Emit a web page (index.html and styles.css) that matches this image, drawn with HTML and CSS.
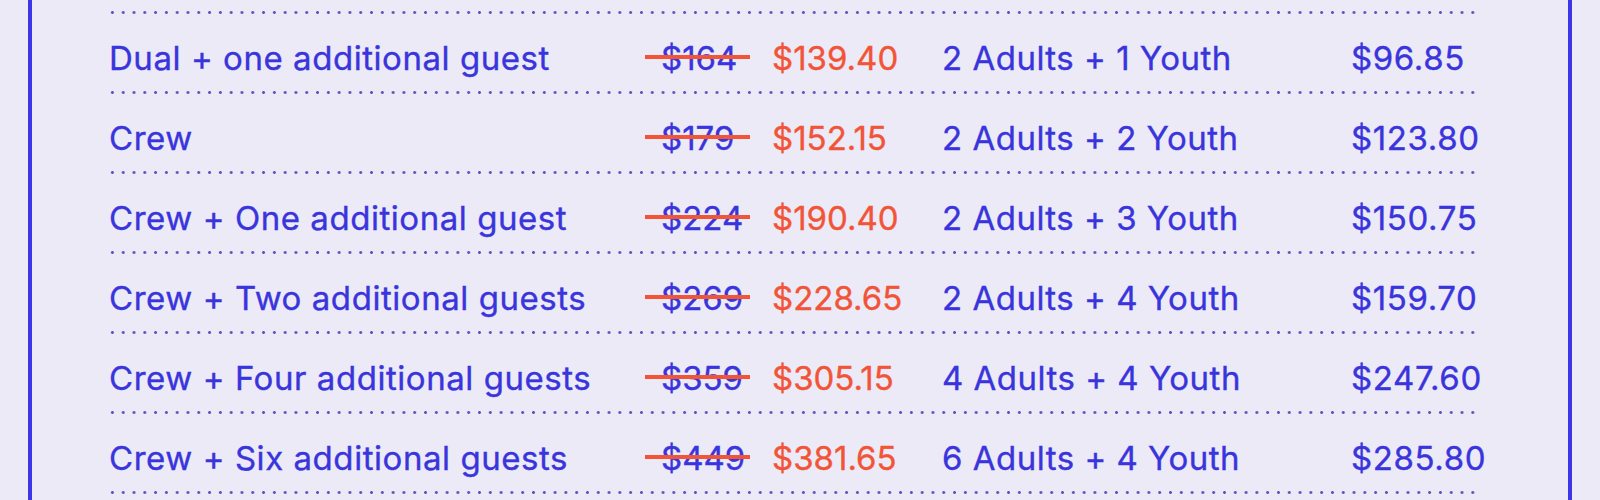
FILE: index.html
```html
<!DOCTYPE html>
<html lang="en">
<head>
    <meta charset="UTF-8">
    <meta name="viewport" content="width=device-width, initial-scale=1.0">
    <title>Membership Prices</title>
    <link rel="stylesheet" href="styles.css">
</head>
<body>
    <div class="price-card">
        <div class="price-list">
            <div class="price-row">
                <span class="tier">Dual + one additional guest</span>
                <span class="old-price">$164</span>
                <span class="new-price">$139.40</span>
                <span class="party">2 Adults + 1 Youth</span>
                <span class="per-visit">$96.85</span>
            </div>
            <div class="price-row">
                <span class="tier">Crew</span>
                <span class="old-price">$179</span>
                <span class="new-price">$152.15</span>
                <span class="party">2 Adults + 2 Youth</span>
                <span class="per-visit">$123.80</span>
            </div>
            <div class="price-row">
                <span class="tier">Crew + One additional guest</span>
                <span class="old-price">$224</span>
                <span class="new-price">$190.40</span>
                <span class="party">2 Adults + 3 Youth</span>
                <span class="per-visit">$150.75</span>
            </div>
            <div class="price-row">
                <span class="tier">Crew + Two additional guests</span>
                <span class="old-price">$269</span>
                <span class="new-price">$228.65</span>
                <span class="party">2 Adults + 4 Youth</span>
                <span class="per-visit">$159.70</span>
            </div>
            <div class="price-row">
                <span class="tier">Crew + Four additional guests</span>
                <span class="old-price">$359</span>
                <span class="new-price">$305.15</span>
                <span class="party">4 Adults + 4 Youth</span>
                <span class="per-visit">$247.60</span>
            </div>
            <div class="price-row">
                <span class="tier">Crew + Six additional guests</span>
                <span class="old-price">$449</span>
                <span class="new-price">$381.65</span>
                <span class="party">6 Adults + 4 Youth</span>
                <span class="per-visit">$285.80</span>
            </div>
        </div>
    </div>
</body>
</html>
```

FILE: styles.css
```css
body {
    margin: 0;
    background-color: #ebeaf6;
    font-family: Inter, "Noto Sans", sans-serif;
    color: #3a34dc;
    overflow: hidden;
}
.price-card {
    margin-left: 28px;
    width: 1368px;
    height: 500px;
    border-left: 4px solid #3b37e6;
    border-right: 4px solid #3b37e6;
    padding: 11px 93px 0 75px;
}
.price-list {
    background-image: radial-gradient(circle, #5750bd 1.1px, transparent 1.7px);
    background-size: 10.8px 3px;
    background-repeat: repeat-x;
    background-position: 0 0;
    padding-top: 3px;
}
.price-row {
    display: grid;
    grid-template-columns: 538px 127px 170px 409px auto;
    align-items: center;
    height: 77px;
    padding-bottom: 3px;
    font-size: 33px;
    line-height: 1;
    -webkit-text-stroke: 0.35px currentColor;
    background-image: radial-gradient(circle, #5750bd 1.1px, transparent 1.7px);
    background-size: 10.8px 3px;
    background-repeat: repeat-x;
    background-position: 0 bottom;
}
.price-row span {
    padding-top: 11px;
}
.tier {
    padding-left: 2px;
    letter-spacing: 0.55px;
}
.party {
    letter-spacing: 0.5px;
}
.old-price {
    position: relative;
    width: 105px;
    padding-left: 16px;
    box-sizing: border-box;
    white-space: nowrap;
}
.old-price::after {
    content: "";
    position: absolute;
    left: 0;
    right: 0;
    top: 55%;
    height: 4px;
    background-color: #f25438;
}
.new-price {
    color: #f25438;
}
.per-visit {
    letter-spacing: 0.6px;
}
```
